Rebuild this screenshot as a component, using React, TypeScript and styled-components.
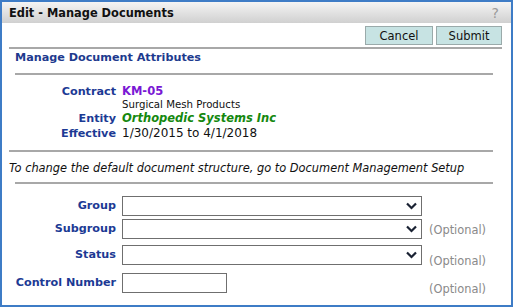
import React from "react";
import styled, { createGlobalStyle } from "styled-components";

const GlobalStyle = createGlobalStyle`
  html, body {
    margin: 0;
    padding: 0;
    background: #ffffff;
  }
  body {
    font-family: "DejaVu Sans", Verdana, sans-serif;
    font-size: 11px;
    color: #111;
  }
`;

const Window = styled.div`
  box-sizing: border-box;
  width: 513px;
  height: 307px;
  border: 2px solid #3e7cc6;
  background: #fff;
  display: flex;
  flex-direction: column;
`;

const TitleBar = styled.div`
  height: 21px;
  display: flex;
  align-items: center;
  justify-content: space-between;
  padding: 0 12px 0 7px;
  background: linear-gradient(#f4f4f4, #d0d0d0);
  .title {
    font-weight: bold;
    font-size: 11.4px;
    color: #111;
  }
  .help {
    color: #9a9a9a;
    font-size: 14px;
  }
`;

const Body = styled.div`
  padding: 3px 9px 0 7px;
`;

const Toolbar = styled.div`
  display: flex;
  justify-content: flex-end;
  gap: 3px;
  padding-bottom: 2px;
`;

const Button = styled.button<{ $w: number }>`
  box-sizing: border-box;
  height: 19px;
  width: ${(p) => p.$w}px;
  padding: 0;
  font-family: "DejaVu Sans", Verdana, sans-serif;
  font-size: 11.5px;
  color: #111;
  background: #c7e3e3;
  border: 1px solid #9aaaaa;
  border-radius: 0;
`;

const Divider = styled.div<{ $inset?: number; $right?: number }>`
  height: 0;
  border-top: 2px solid #a8a8a8;
  margin-left: ${(p) => p.$inset ?? 0}px;
  margin-right: ${(p) => p.$right ?? 0}px;
`;

const SectionTitle = styled.div`
  font-weight: bold;
  font-size: 11.2px;
  color: #1d3a8e;
  padding: 2px 0 9px 6px;
`;

const Details = styled.div`
  display: grid;
  grid-template-columns: 107px 1fr;
  column-gap: 6px;
  padding: 9px 0 9px;
  line-height: 15px;
`;

const Label = styled.div`
  text-align: right;
  font-weight: bold;
  font-size: 11.2px;
  color: #1c3a94;
  white-space: nowrap;
`;

const Value = styled.div<{ $tone?: "purple" | "green" | "small" }>`
  font-size: ${(p) => (p.$tone === "small" ? "10.2px" : p.$tone ? "11.5px" : "12px")};
  line-height: ${(p) => (p.$tone === "small" ? "12px" : "15px")};
  font-weight: ${(p) => (p.$tone === "purple" || p.$tone === "green" ? "bold" : "normal")};
  font-style: ${(p) => (p.$tone === "green" ? "italic" : "normal")};
  color: ${(p) =>
    p.$tone === "purple" ? "#7a18d4" : p.$tone === "green" ? "#15880f" : "#111"};
  white-space: nowrap;
`;

const Note = styled.div`
  font-style: italic;
  font-size: 11.4px;
  padding: 9px 0 7px 0;
`;

const Form = styled.div`
  padding-top: 12px;
`;

const Row = styled.div<{ $after: number }>`
  display: flex;
  align-items: flex-start;
  margin-bottom: ${(p) => p.$after}px;
`;

const FieldLabel = styled(Label)`
  width: 107px;
  line-height: 20px;
  margin-right: 6px;
  flex-shrink: 0;
`;

const SelectBox = styled.div`
  box-sizing: border-box;
  width: 300px;
  height: 20px;
  border: 1px solid #6f6f6f;
  display: flex;
  align-items: center;
  justify-content: flex-end;
  padding-right: 4px;
`;

const TextBox = styled.div`
  box-sizing: border-box;
  width: 105px;
  height: 20px;
  border: 1px solid #6f6f6f;
`;

const Optional = styled.div<{ $top: number; $left: number }>`
  color: #8a8a8a;
  font-size: 11.4px;
  line-height: 14px;
  margin-top: ${(p) => p.$top}px;
  margin-left: ${(p) => p.$left}px;
`;

const Chevron = () => (
  <svg width="11" height="8" viewBox="0 0 11 8">
    <path d="M1 1.5 L5.5 6 L10 1.5" fill="none" stroke="#1a2233" strokeWidth="2.2" />
  </svg>
);

export default function App() {
  return (
    <Window>
      <GlobalStyle />
      <TitleBar>
        <span className="title">Edit - Manage Documents</span>
        <span className="help">?</span>
      </TitleBar>
      <Body>
        <Toolbar>
          <Button $w={68}>Cancel</Button>
          <Button $w={66}>Submit</Button>
        </Toolbar>
        <Divider />
        <SectionTitle>Manage Document Attributes</SectionTitle>
        <Divider $inset={6} $right={9} />
        <Details>
          <Label>Contract</Label>
          <Value $tone="purple">KM-05</Value>
          <div />
          <Value $tone="small">Surgical Mesh Products</Value>
          <Label>Entity</Label>
          <Value $tone="green">Orthopedic Systems Inc</Value>
          <Label>Effective</Label>
          <Value>1/30/2015 to 4/1/2018</Value>
        </Details>
        <Divider $right={9} />
        <Note>To change the default document structure, go to Document Management Setup</Note>
        <Divider $inset={6} $right={9} />
        <Form>
          <Row $after={3}>
            <FieldLabel>Group</FieldLabel>
            <SelectBox>
              <Chevron />
            </SelectBox>
          </Row>
          <Row $after={6}>
            <FieldLabel>Subgroup</FieldLabel>
            <SelectBox>
              <Chevron />
            </SelectBox>
            <Optional $top={4} $left={7}>(Optional)</Optional>
          </Row>
          <Row $after={5}>
            <FieldLabel>Status</FieldLabel>
            <SelectBox>
              <Chevron />
            </SelectBox>
            <Optional $top={9} $left={7}>(Optional)</Optional>
          </Row>
          <Row $after={0}>
            <FieldLabel>Control Number</FieldLabel>
            <TextBox />
            <Optional $top={9} $left={202}>(Optional)</Optional>
          </Row>
        </Form>
      </Body>
    </Window>
  );
}
